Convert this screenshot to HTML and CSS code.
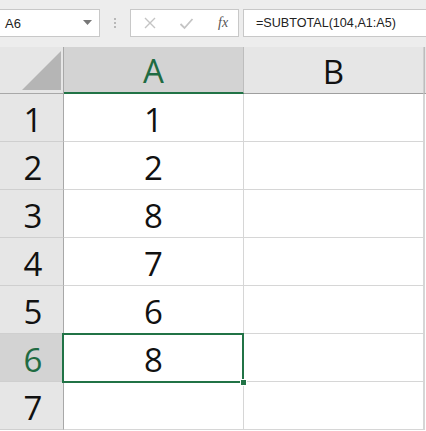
FILE: index.html
```html
<!DOCTYPE html>
<html>
<head>
<meta charset="utf-8">
<link rel="stylesheet" href="styles.css">
</head>
<body>
<div class="toolbar">
  <div class="namebox">
    <span class="name">A6</span>
    <svg class="caret" width="9" height="5" viewBox="0 0 9 5"><polygon points="0,0 9,0 4.5,5" fill="#777"/></svg>
  </div>
  <div class="grip"><i></i><i></i><i></i></div>
  <div class="btnbox">
    <svg class="ico" width="14" height="14" viewBox="0 0 14 14"><path d="M2 2 L12 12 M12 2 L2 12" stroke="#c4c4c4" stroke-width="1.4" fill="none"/></svg>
    <svg class="ico" width="15" height="13" viewBox="0 0 15 13"><path d="M1.5 7 L5.5 11 L13.5 2" stroke="#c4c4c4" stroke-width="1.8" fill="none"/></svg>
    <span class="fx">fx</span>
  </div>
  <div class="formula">=SUBTOTAL(104,A1:A5)</div>
</div>
<div class="sheet">
  <div class="corner"><svg width="39" height="39" viewBox="0 0 39 39"><polygon points="39,0 39,39 0,39" fill="#b5b5b5"/></svg></div>
  <div class="colhead sel">A</div>
  <div class="colhead">B</div>
  <div class="edge head"></div>

  <div class="rowhead">1</div><div class="cell">1</div><div class="cell"></div><div class="edge"></div>
  <div class="rowhead">2</div><div class="cell">2</div><div class="cell"></div><div class="edge"></div>
  <div class="rowhead">3</div><div class="cell">8</div><div class="cell"></div><div class="edge"></div>
  <div class="rowhead">4</div><div class="cell">7</div><div class="cell"></div><div class="edge"></div>
  <div class="rowhead">5</div><div class="cell">6</div><div class="cell"></div><div class="edge"></div>
  <div class="rowhead sel">6</div><div class="cell active">8<div class="selbox"></div><div class="handle"></div></div><div class="cell"></div><div class="edge"></div>
  <div class="rowhead">7</div><div class="cell"></div><div class="cell"></div><div class="edge"></div>
</div>
</body>
</html>
```
FILE: styles.css
```css
* { box-sizing: border-box; }
html, body { margin: 0; padding: 0; }
body {
  width: 426px;
  height: 431px;
  overflow: hidden;
  background: #ffffff;
  font-family: "Liberation Sans", Arial, sans-serif;
}
.toolbar {
  height: 47px;
  background: #ededed;
  display: flex;
  align-items: flex-start;
  padding-top: 9px;
}
.namebox {
  width: 100px;
  height: 28px;
  background: #fff;
  border: 1px solid #c8c8c8;
  border-left: none;
  display: flex;
  align-items: center;
  justify-content: space-between;
  padding: 0 7px 0 5px;
}
.name { font-size: 13px; color: #222; }
.caret { margin-top: -2px; }
.grip {
  width: 30px;
  height: 28px;
  display: flex;
  flex-direction: column;
  align-items: center;
  justify-content: center;
  gap: 2px;
}
.grip i {
  display: block;
  width: 2px;
  height: 2px;
  background: #b8b8b8;
}
.btnbox {
  width: 109px;
  height: 28px;
  background: #fff;
  border: 1px solid #c8c8c8;
  display: flex;
  align-items: center;
  padding-left: 12px;
  gap: 22px;
}
.fx {
  font-family: "Liberation Serif", "Times New Roman", serif;
  font-style: italic;
  font-size: 14px;
  color: #555;
  margin-left: 2px;
}
.formula {
  margin-left: 4px;
  flex: 1;
  height: 28px;
  background: #fff;
  border: 1px solid #c8c8c8;
  border-right: none;
  font-size: 12.6px;
  color: #222;
  padding-left: 12px;
  line-height: 26px;
}
.sheet {
  display: grid;
  grid-template-columns: 64px 180px 180px 2px;
  grid-template-rows: 47px repeat(7, 48px);
  font-family: "Open Sans", "Liberation Sans", sans-serif;
  font-weight: 400;
  font-size: 33px;
  color: #111;
}
.corner {
  background: #e6e6e6;
  border-right: 1px solid #a8a8a8;
  border-bottom: 1px solid #a8a8a8;
  display: flex;
  align-items: flex-end;
  justify-content: flex-end;
  padding: 0 2px 3px 0;
}
.colhead {
  background: #e6e6e6;
  border-right: 1px solid #cfcfcf;
  border-bottom: 1px solid #9f9f9f;
  display: flex;
  align-items: center;
  justify-content: center;
  padding-top: 2px;
}
.colhead.sel {
  background: #d3d3d3;
  color: #1f6b42;
  border-right: 1px solid #bdbdbd;
  border-bottom: 2px solid #217346;
}
.edge {
  background: #fff;
  border-left: 1px solid #d6d6d6;
}
.edge.head { background: #e6e6e6; border-left: 1px solid #bdbdbd; border-bottom: 1px solid #9f9f9f; }
.rowhead {
  background: #e6e6e6;
  border-right: 1px solid #a8a8a8;
  border-bottom: 1px solid #cfcfcf;
  display: flex;
  align-items: center;
  justify-content: center;
  padding-left: 3px;
  padding-top: 3px;
}
.rowhead.sel { background: #d3d3d3; color: #1f6b42; }
.cell {
  border-right: 1px solid #d6d6d6;
  border-bottom: 1px solid #d6d6d6;
  display: flex;
  align-items: center;
  justify-content: center;
  padding-top: 3px;
}
.cell.active { position: relative; }
.selbox {
  position: absolute;
  left: -2px;
  top: -1px;
  right: -1px;
  bottom: -2px;
  border: 2px solid #217346;
}
.handle {
  position: absolute;
  right: -4px;
  bottom: -5px;
  width: 7px;
  height: 7px;
  background: #217346;
  border: 1px solid #fff;
}
```
